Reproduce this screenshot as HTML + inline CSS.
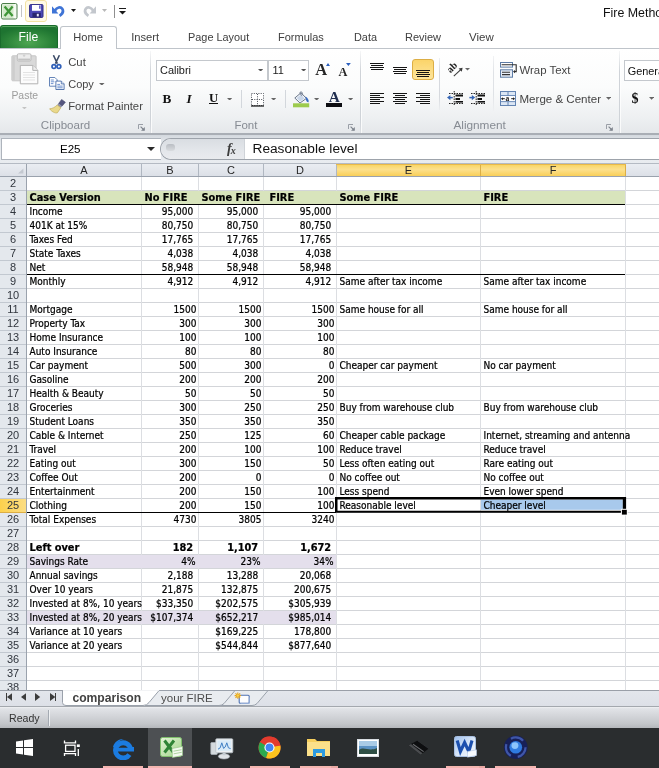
<!DOCTYPE html><html><head><meta charset="utf-8"><title>Fire Method</title><style>
*{box-sizing:border-box;margin:0;padding:0}
html,body{width:659px;height:768px;overflow:hidden;background:#fff}
body{position:relative;will-change:transform;font-family:"Liberation Sans",sans-serif;color:#000}
.a{position:absolute;white-space:nowrap}
.t{position:absolute;white-space:nowrap;line-height:1}
.s{font-family:"Liberation Serif",serif}
.cell{position:absolute;white-space:nowrap;font-family:"DejaVu Sans Condensed","DejaVu Sans","Liberation Sans",sans-serif;font-size:10px;line-height:14px;height:14px;color:#000;-webkit-text-stroke:.22px #000}
.num{text-align:right}
.b{font-family:"DejaVu Sans","Liberation Sans",sans-serif;font-weight:bold;font-size:9.8px}
.bn{font-family:"DejaVu Sans","Liberation Sans",sans-serif;font-weight:bold;font-size:9.8px;text-align:right}
.rh{position:absolute;left:0;width:26px;height:14px;font-size:11px;line-height:13px;text-align:center;color:#30353d}
.ch{position:absolute;top:164px;height:12px;font-size:11px;line-height:13px;text-align:center;color:#262626}
.hl{position:absolute;height:1px;background:#d3d5d9}
.vl{position:absolute;width:1px;background:#dcdee2}
</style></head><body>
<div class="a" style="left:0px;top:0px;width:659px;height:25px;background:#fff"></div>
<svg class="a" style="left:1px;top:3px" width="17" height="17" viewBox="0 0 17 17"><rect x="0.5" y="0.5" width="15.5" height="15.5" rx="1.5" fill="#f4faf1" stroke="#4c7f4a"/><rect x="1.5" y="1.5" width="11" height="13.5" fill="#d3e9cb"/><path d="M3.6 3.6 L11.6 13 M11.6 3.6 L3.6 13" stroke="#3f9638" stroke-width="2.3"/></svg>
<div class="a" style="left:21px;top:5px;width:1px;height:12px;background:#c4c4c4"></div>
<div class="a" style="left:25px;top:0px;width:22px;height:21.5px;background:#fffae6;border:1px solid #f3e2a2;border-radius:3px"></div>
<svg class="a" style="left:29px;top:4px" width="15" height="14" viewBox="0 0 15 14"><rect x="0.6" y="0.6" width="13.4" height="12.8" rx="1" fill="#4d49b5" stroke="#312e86"/><rect x="3" y="1" width="8.8" height="5.8" fill="#fff"/><rect x="10" y="1.4" width="1.6" height="3.4" fill="#6b68c9"/><rect x="3.4" y="8.8" width="8.4" height="4.4" fill="#28266f"/><rect x="7.8" y="9.8" width="2" height="2.6" fill="#e6e6f7"/></svg>
<svg class="a" style="left:52px;top:5px" width="13" height="12" viewBox="0 0 13 12"><path d="M0 1.2V8.4H6.4Z" fill="#3f74d6"/><path d="M2.8 5.6C5.2 2.2 8.6 1.4 10.2 3.8C11.6 6 10.6 8.8 7.6 10.8" fill="none" stroke="#3f74d6" stroke-width="2.7" stroke-linecap="butt"/></svg>
<svg class="a" style="left:70.5px;top:9px" width="5.0" height="3" viewBox="0 0 5.0 3"><path d="M0 0H5.0L2.5 3Z" fill="#1a1a1a"/></svg>
<svg class="a" style="left:82.5px;top:5px;transform:scaleX(-1)" width="13" height="12" viewBox="0 0 13 12"><path d="M0 1.2V8.4H6.4Z" fill="#c3c7cd"/><path d="M2.8 5.6C5.2 2.2 8.6 1.4 10.2 3.8C11.6 6 10.6 8.8 7.6 10.8" fill="none" stroke="#c3c7cd" stroke-width="2.7" stroke-linecap="butt"/></svg>
<svg class="a" style="left:101.5px;top:9px" width="5.0" height="3" viewBox="0 0 5.0 3"><path d="M0 0H5.0L2.5 3Z" fill="#b8b8b8"/></svg>
<div class="a" style="left:114px;top:5px;width:1px;height:13px;background:#8f8f8f"></div>
<div class="a" style="left:118.5px;top:8px;width:7px;height:1px;background:#1a1a1a"></div>
<svg class="a" style="left:118.5px;top:11px" width="7.0" height="3.5" viewBox="0 0 7.0 3.5"><path d="M0 0H7.0L3.5 3.5Z" fill="#1a1a1a"/></svg>
<div class="t" style="left:603px;top:7.20px;font-size:12.4px;color:#111;">Fire Method</div>
<div class="a" style="left:0px;top:48px;width:659px;height:1px;background:#bfc4ca"></div>
<div class="a" style="left:0px;top:25px;width:57.5px;height:23px;background:radial-gradient(ellipse 60% 70% at 50% 75%,#4ea652,#2a8238 70%,#1e7431);border-radius:3px 3px 0 0;border:1px solid #1a6b2c;border-bottom:0;box-shadow:inset 0 1px 0 #5aa860"></div>
<div class="t" style="left:18.6px;top:30.67px;font-size:12.2px;color:#fff;">File</div>
<div class="a" style="left:60px;top:25.5px;width:57px;height:23.5px;background:#fff;border:1px solid #bfc4ca;border-bottom:0;border-radius:3px 3px 0 0"></div>
<div class="t" style="left:73.3px;top:31.90px;font-size:11.1px;color:#404040;">Home</div>
<div class="t" style="left:131.2px;top:31.82px;font-size:11.2px;color:#404040;">Insert</div>
<div class="t" style="left:188px;top:32.07px;font-size:10.9px;color:#404040;">Page Layout</div>
<div class="t" style="left:278px;top:31.99px;font-size:11.0px;color:#404040;">Formulas</div>
<div class="t" style="left:354px;top:32.07px;font-size:10.9px;color:#404040;">Data</div>
<div class="t" style="left:405px;top:31.99px;font-size:11.0px;color:#404040;">Review</div>
<div class="t" style="left:469px;top:31.57px;font-size:11.5px;color:#404040;">View</div>
<div class="a" style="left:0px;top:49px;width:659px;height:85px;background:linear-gradient(#ffffff,#fbfcfc 45%,#eef0f2 80%,#e4e7ea)"></div>
<div class="a" style="left:0px;top:133px;width:659px;height:1.5px;background:#a9aeb5"></div>
<div class="a" style="left:149.5px;top:51px;width:1px;height:82px;background:linear-gradient(#f6f7f8,#cfd3d8 25%,#cfd3d8 85%,#dcdfe3)"></div>
<div class="a" style="left:150.5px;top:51px;width:1px;height:82px;background:rgba(255,255,255,.75)"></div>
<div class="a" style="left:360px;top:51px;width:1px;height:82px;background:linear-gradient(#f6f7f8,#cfd3d8 25%,#cfd3d8 85%,#dcdfe3)"></div>
<div class="a" style="left:361px;top:51px;width:1px;height:82px;background:rgba(255,255,255,.75)"></div>
<div class="a" style="left:618.5px;top:51px;width:1px;height:82px;background:linear-gradient(#f6f7f8,#cfd3d8 25%,#cfd3d8 85%,#dcdfe3)"></div>
<div class="a" style="left:619.5px;top:51px;width:1px;height:82px;background:rgba(255,255,255,.75)"></div>
<svg class="a" style="left:11px;top:53px" width="28" height="33" viewBox="0 0 28 33"><rect x="0.9" y="2.8" width="24.2" height="25" rx="0.8" fill="#d9d9d9" stroke="#c6c6c6"/><rect x="1.4" y="3.3" width="2.4" height="24" fill="#cdcdcd"/><rect x="6.3" y="0.8" width="13.7" height="7.2" rx="1.2" fill="#ececec" stroke="#bcbcbc"/><rect x="7.2" y="5.6" width="12" height="1.8" fill="#c2c2c2"/><circle cx="13.1" cy="2.6" r="1.2" fill="#d0d0d0"/><path d="M9.3 12.4 h12.5 l5 5 v13.4 h-17.5 z" fill="#fcfcfc" stroke="#b2b2b2"/><path d="M21.8 12.4v5h5" fill="#eee" stroke="#b2b2b2"/><path d="M12 19.5h12M12 22h12M12 24.5h12M12 27h12" stroke="#e3e3e3"/></svg>
<div class="t" style="left:11.4px;top:91.45px;font-size:10.45px;color:#9c9c9c;">Paste</div>
<svg class="a" style="left:21.9px;top:106.8px" width="4.8" height="2.4" viewBox="0 0 4.8 2.4"><path d="M0 0H4.8L2.4 2.4Z" fill="#c4c4c4"/></svg>
<svg class="a" style="left:51px;top:54.5px" width="11" height="15" viewBox="0 0 11 15"><path d="M2.4 0.2 L6.4 8.6 M8.4 0.2 L4.4 8.6" stroke="#3b4a66" stroke-width="1.5" fill="none"/><circle cx="2.9" cy="11.6" r="1.9" fill="none" stroke="#2f5fb8" stroke-width="1.7"/><circle cx="7.9" cy="11.6" r="1.9" fill="none" stroke="#2f5fb8" stroke-width="1.7"/></svg>
<div class="t" style="left:68.2px;top:56.73px;font-size:11.3px;color:#464646;">Cut</div>
<svg class="a" style="left:48.5px;top:77px" width="16" height="13" viewBox="0 0 16 13"><path d="M0.5 0.5h5.4l2.3 2.3v6.4h-7.7z" fill="#fff" stroke="#5578b0" stroke-width=".9"/><path d="M1.8 3h3M1.8 4.8h3.6M1.8 6.6h2.6" stroke="#5d86c8" stroke-width=".9"/><path d="M6.9 4.1h5.4l2.8 2.8v5.6h-8.2z" fill="#fff" stroke="#456aa6" stroke-width=".9"/><path d="M12.3 4.1v2.8h2.8" fill="#e2eaf6" stroke="#456aa6" stroke-width=".8"/><path d="M8.3 7.4h2.8M8.3 9.1h5.4M8.3 10.8h5.4" stroke="#5d86c8" stroke-width=".9"/></svg>
<div class="t" style="left:68.2px;top:78.89px;font-size:11px;color:#464646;">Copy</div>
<svg class="a" style="left:99.3px;top:82.7px" width="5.6" height="2.6" viewBox="0 0 5.6 2.6"><path d="M0 0H5.6L2.8 2.6Z" fill="#666"/></svg>
<svg class="a" style="left:49px;top:98.5px" width="17" height="15" viewBox="0 0 17 15"><path d="M12.6 0.4 L16.4 3.2 L13 7.2 L9.6 4.6 Z" fill="#55567f" stroke="#3b3c60" stroke-width=".5"/><path d="M9.6 4.6 L13 7.2 L11.8 8.8 L8.2 6Z" fill="#8a8ca8"/><path d="M8.2 6 L11.8 8.8 L8.4 13.8 C6 14.6 2.4 12.4 0.6 9.8 C3.6 9.6 6 8.2 8.2 6Z" fill="#ead98c" stroke="#b9a24a" stroke-width=".6"/></svg>
<div class="t" style="left:68.2px;top:100.63px;font-size:11.3px;color:#464646;">Format Painter</div>
<div class="t" style="left:40.8px;top:120.42px;font-size:11.55px;color:#868b93;">Clipboard</div>
<svg class="a" style="left:138px;top:123.5px" width="7" height="7" viewBox="0 0 7 7"><path d="M0.5 5V0.5H5" fill="none" stroke="#9a9fa7"/><path d="M2.6 2.6L6 6" stroke="#7d838c" stroke-width="1.1"/><path d="M6.8 3V6.8H3Z" fill="#7d838c"/></svg>
<div class="a" style="left:155.5px;top:59.5px;width:112.5px;height:21px;background:#fff;border:1px solid #c4c8cd"></div>
<div class="t" style="left:160px;top:64.53px;font-size:10.95px;color:#1a1a1a;">Calibri</div>
<svg class="a" style="left:258px;top:68.5px" width="5.2" height="2.6" viewBox="0 0 5.2 2.6"><path d="M0 0H5.2L2.6 2.6Z" fill="#555"/></svg>
<div class="a" style="left:267.5px;top:59.5px;width:41.5px;height:21px;background:#fff;border:1px solid #c4c8cd"></div>
<div class="t" style="left:272.5px;top:64.53px;font-size:10.95px;color:#1a1a1a;">11</div>
<svg class="a" style="left:301px;top:68.5px" width="5.2" height="2.6" viewBox="0 0 5.2 2.6"><path d="M0 0H5.2L2.6 2.6Z" fill="#555"/></svg>
<div class="t s" style="left:315.3px;top:62.18px;font-size:16.5px;color:#262626;font-weight:bold">A</div>
<div class="a" style="left:326px;top:62.5px;width:0;height:0;border-left:2.4px solid transparent;border-right:2.4px solid transparent;border-bottom:3px solid #2a5fbe"></div>
<div class="t s" style="left:338.6px;top:65.70px;font-size:12.3px;color:#262626;font-weight:bold">A</div>
<svg class="a" style="left:346px;top:63px" width="4.8" height="3" viewBox="0 0 4.8 3"><path d="M0 0H4.8L2.4 3Z" fill="#2a5fbe"/></svg>
<div class="t s" style="left:162.5px;top:91.94px;font-size:13.2px;color:#111;font-weight:bold">B</div>
<div class="t s" style="left:186.5px;top:91.94px;font-size:13.2px;color:#111;font-weight:bold;font-style:italic">I</div>
<div class="t s" style="left:209px;top:91.88px;font-size:12.8px;color:#111;font-weight:bold">U</div>
<div class="a" style="left:209px;top:103.2px;width:9px;height:1px;background:#111"></div>
<svg class="a" style="left:226.5px;top:97.6px" width="5.2" height="2.6" viewBox="0 0 5.2 2.6"><path d="M0 0H5.2L2.6 2.6Z" fill="#666"/></svg>
<div class="a" style="left:240.5px;top:90px;width:1px;height:18px;background:#d3d7dc"></div>
<svg class="a" style="left:251px;top:92.5px" width="13" height="14" viewBox="0 0 13 14"><rect x="0.5" y="0.5" width="12" height="12" fill="#fff" stroke="#4a4f57" stroke-dasharray="1 1.3"/><path d="M6.5 1V12M1 6.5H12" stroke="#4a4f57" stroke-dasharray="1 1.3"/><path d="M0 13H13" stroke="#111" stroke-width="1.2"/></svg>
<svg class="a" style="left:271px;top:97.6px" width="5.2" height="2.6" viewBox="0 0 5.2 2.6"><path d="M0 0H5.2L2.6 2.6Z" fill="#666"/></svg>
<div class="a" style="left:284.5px;top:90px;width:1px;height:18px;background:#d3d7dc"></div>
<svg class="a" style="left:293px;top:90.5px" width="17" height="17" viewBox="0 0 17 17"><path d="M1.8 7 L8 1.8 L13.4 7.4 L7 12 Z" fill="#f3f6fa" stroke="#6b778b" stroke-width="1"/><path d="M3.6 7.1 L8 3.6 L11.6 7.4 L7.1 10.4Z" fill="#c9d6e8"/><path d="M8.6 4.6 C6.6 2.8 6.6 0.8 8 0.8 C9.4 0.8 9.6 2.6 8.8 4.4" stroke="#6b778b" stroke-width=".9" fill="none"/><path d="M12.4 5.4 C14.6 6.4 16.2 9 15.6 11.2 C14.6 11.6 13.2 10.6 13 8.6Z" fill="#3a6ec4"/><rect x="0" y="12.3" width="16.2" height="4" fill="#9dcb4e"/></svg>
<svg class="a" style="left:314px;top:97.6px" width="5.2" height="2.6" viewBox="0 0 5.2 2.6"><path d="M0 0H5.2L2.6 2.6Z" fill="#666"/></svg>
<div class="t s" style="left:328.8px;top:89.49px;font-size:15.3px;color:#1f2d4f;font-weight:bold">A</div>
<div class="a" style="left:326px;top:103px;width:16px;height:3.8px;background:#0d0d12"></div>
<svg class="a" style="left:347.6px;top:97.6px" width="5.2" height="2.6" viewBox="0 0 5.2 2.6"><path d="M0 0H5.2L2.6 2.6Z" fill="#666"/></svg>
<div class="t" style="left:234.4px;top:120.47px;font-size:11.5px;color:#868b93;">Font</div>
<svg class="a" style="left:347.5px;top:123.5px" width="7" height="7" viewBox="0 0 7 7"><path d="M0.5 5V0.5H5" fill="none" stroke="#9a9fa7"/><path d="M2.6 2.6L6 6" stroke="#7d838c" stroke-width="1.1"/><path d="M6.8 3V6.8H3Z" fill="#7d838c"/></svg>
<div class="a" style="left:370px;top:63px;width:14px;height:1px;background:#151515"></div>
<div class="a" style="left:371px;top:65px;width:12px;height:1px;background:#151515"></div>
<div class="a" style="left:370px;top:67px;width:14px;height:1px;background:#151515"></div>
<div class="a" style="left:371px;top:69px;width:12px;height:1px;background:#151515"></div>
<div class="a" style="left:393px;top:67px;width:14px;height:1px;background:#151515"></div>
<div class="a" style="left:394px;top:69px;width:12px;height:1px;background:#151515"></div>
<div class="a" style="left:393px;top:71px;width:14px;height:1px;background:#151515"></div>
<div class="a" style="left:394px;top:73px;width:12px;height:1px;background:#151515"></div>
<div class="a" style="left:412.3px;top:59.2px;width:21.6px;height:21.2px;background:linear-gradient(#fbd46a,#fde59c);border:1px solid #dcae45;border-radius:3px"></div>
<div class="a" style="left:416px;top:70px;width:14px;height:1px;background:#151515"></div>
<div class="a" style="left:417px;top:72px;width:12px;height:1px;background:#151515"></div>
<div class="a" style="left:416px;top:74px;width:14px;height:1px;background:#151515"></div>
<div class="a" style="left:417px;top:76px;width:12px;height:1px;background:#151515"></div>
<svg class="a" style="left:446px;top:61px" width="20" height="18" viewBox="0 0 20 18"><text x="0" y="0" font-family="Liberation Serif, serif" font-size="10" font-weight="bold" fill="#222" transform="translate(4.4 12.4) rotate(-45)">ab</text><path d="M7.8 15.2 L15 8.4" stroke="#3c3c3c" stroke-width="1.1" fill="none"/><path d="M16.6 6.8 L12.6 7.6 L15.8 10.8Z" fill="#3c3c3c"/></svg>
<svg class="a" style="left:464.8px;top:68.2px" width="5.0" height="2.5" viewBox="0 0 5.0 2.5"><path d="M0 0H5.0L2.5 2.5Z" fill="#666"/></svg>
<div class="a" style="left:370px;top:93px;width:14px;height:1px;background:#151515"></div>
<div class="a" style="left:370px;top:95px;width:10px;height:1px;background:#151515"></div>
<div class="a" style="left:370px;top:97px;width:14px;height:1px;background:#151515"></div>
<div class="a" style="left:370px;top:99px;width:10px;height:1px;background:#151515"></div>
<div class="a" style="left:370px;top:101px;width:14px;height:1px;background:#151515"></div>
<div class="a" style="left:370px;top:103px;width:10px;height:1px;background:#151515"></div>
<div class="a" style="left:393px;top:93px;width:14px;height:1px;background:#151515"></div>
<div class="a" style="left:395px;top:95px;width:10px;height:1px;background:#151515"></div>
<div class="a" style="left:393px;top:97px;width:14px;height:1px;background:#151515"></div>
<div class="a" style="left:395px;top:99px;width:10px;height:1px;background:#151515"></div>
<div class="a" style="left:393px;top:101px;width:14px;height:1px;background:#151515"></div>
<div class="a" style="left:395px;top:103px;width:10px;height:1px;background:#151515"></div>
<div class="a" style="left:416px;top:93px;width:14px;height:1px;background:#151515"></div>
<div class="a" style="left:420px;top:95px;width:10px;height:1px;background:#151515"></div>
<div class="a" style="left:416px;top:97px;width:14px;height:1px;background:#151515"></div>
<div class="a" style="left:420px;top:99px;width:10px;height:1px;background:#151515"></div>
<div class="a" style="left:416px;top:101px;width:14px;height:1px;background:#151515"></div>
<div class="a" style="left:420px;top:103px;width:10px;height:1px;background:#151515"></div>
<div class="a" style="left:438.5px;top:58px;width:1px;height:52px;background:linear-gradient(#eef0f2,#d6d9de 25%,#d6d9de 75%,#eceef0)"></div>
<div class="a" style="left:492.5px;top:56px;width:1px;height:55px;background:linear-gradient(#f1f2f4,#dfe2e6 30%,#dfe2e6 70%,#eff0f2)"></div>
<svg class="a" style="left:447px;top:90px" width="17" height="16" viewBox="0 0 17 16"><path d="M2 3.5H16M2 13.5H16" stroke="#222" stroke-width="1" stroke-dasharray="1.5 1"/><path d="M7.2 1V15.5" stroke="#222" stroke-width="1" stroke-dasharray="1.5 1"/><path d="M8.5 5.5H16" stroke="#111" stroke-width="2"/><path d="M8.5 9H13" stroke="#111" stroke-width="2"/><path d="M8.5 11.8H16" stroke="#111" stroke-width="1.6"/><path d="M2.4 7.6H5.8" stroke="#3565b5" stroke-width="1.5"/><path d="M3.4 4.9L0 7.6L3.4 10.3Z" fill="#3565b5"/></svg>
<svg class="a" style="left:469px;top:90px" width="17" height="16" viewBox="0 0 17 16"><path d="M2 3.5H16M2 13.5H16" stroke="#222" stroke-width="1" stroke-dasharray="1.5 1"/><path d="M7.2 1V15.5" stroke="#222" stroke-width="1" stroke-dasharray="1.5 1"/><path d="M8.5 5.5H16" stroke="#111" stroke-width="2"/><path d="M8.5 9H13" stroke="#111" stroke-width="2"/><path d="M8.5 11.8H16" stroke="#111" stroke-width="1.6"/><path d="M0.4 7.6H4" stroke="#3565b5" stroke-width="1.5"/><path d="M2.8 4.9L6.2 7.6L2.8 10.3Z" fill="#3565b5"/></svg>
<svg class="a" style="left:500px;top:61.5px" width="17" height="16" viewBox="0 0 17 16"><rect x="0.5" y="0.5" width="12" height="4.6" fill="#fff" stroke="#5d7ca6"/><rect x="0.5" y="7.8" width="12" height="7.4" fill="#e8eef7" stroke="#5d7ca6"/><path d="M1.6 2.8H16.2V9.6H14" stroke="#2c2c2c" fill="none" stroke-width="1.1"/><path d="M15 8L13 9.6L15 11.2Z" fill="#2c2c2c"/><path d="M2 10.2H10M2 12.6H10" stroke="#333" stroke-width="1.1"/></svg>
<div class="t" style="left:519.5px;top:65.35px;font-size:11.4px;color:#444;">Wrap Text</div>
<svg class="a" style="left:500px;top:91px" width="16" height="15" viewBox="0 0 16 15"><rect x="0.5" y="0.5" width="15" height="14" fill="#dbe6f4" stroke="#6384b2"/><path d="M0.5 4.6h15M0.5 10.6h15M8 0.5v4M8 10.6v4" stroke="#6384b2"/><rect x="1" y="5.1" width="14" height="5" fill="#fff"/><path d="M1.4 7.7h3.4M14.6 7.7h-3.4" stroke="#222" stroke-width="1"/><path d="M3 6.2L1.2 7.7 3 9.2ZM13 6.2l1.8 1.5-1.8 1.5Z" fill="#222"/><text x="5.6" y="10" font-family="Liberation Serif, serif" font-weight="bold" font-size="7.5" fill="#111">a</text></svg>
<div class="t" style="left:519.5px;top:94.02px;font-size:11.55px;color:#444;">Merge &amp; Center</div>
<svg class="a" style="left:606px;top:97px" width="5.2" height="2.8" viewBox="0 0 5.2 2.8"><path d="M0 0H5.2L2.6 2.8Z" fill="#666"/></svg>
<div class="t" style="left:453.4px;top:120.21px;font-size:11.8px;color:#868b93;">Alignment</div>
<svg class="a" style="left:606px;top:123.5px" width="7" height="7" viewBox="0 0 7 7"><path d="M0.5 5V0.5H5" fill="none" stroke="#9a9fa7"/><path d="M2.6 2.6L6 6" stroke="#7d838c" stroke-width="1.1"/><path d="M6.8 3V6.8H3Z" fill="#7d838c"/></svg>
<div class="a" style="left:623.5px;top:59.5px;width:40px;height:21px;background:#fff;border:1px solid #c4c8cd"></div>
<div class="t" style="left:627.7px;top:65.77px;font-size:10.9px;color:#111;">General</div>
<div class="t s" style="left:631.5px;top:92.28px;font-size:14px;color:#111;font-weight:bold">$</div>
<svg class="a" style="left:649px;top:97px" width="5.2" height="2.8" viewBox="0 0 5.2 2.8"><path d="M0 0H5.2L2.6 2.8Z" fill="#666"/></svg>
<div class="a" style="left:0px;top:134.5px;width:659px;height:29.5px;background:linear-gradient(#d3d8de,#e4e8ec 25%,#e9ecf0)"></div>
<div class="a" style="left:0.5px;top:138px;width:160.5px;height:22px;background:#fff;border:1px solid #aeb4bc;border-right:0"></div>
<div class="t" style="left:60px;top:143.72px;font-size:11.55px;color:#000;">E25</div>
<svg class="a" style="left:146.7px;top:147.4px" width="8" height="4" viewBox="0 0 8 4"><path d="M0 0H8L4 4Z" fill="#2a2a2a"/></svg>
<div class="a" style="left:159.5px;top:138px;width:500px;height:22px;background:#fff;border:1px solid #9da3ab;border-right:0;border-radius:11px 0 0 11px"></div>
<div class="a" style="left:160.5px;top:139px;width:84px;height:20px;background:linear-gradient(#d9dde2,#e4e7eb 60%,#e9ebee);border-radius:10px 0 0 10px"></div>
<div class="a" style="left:166px;top:144.4px;width:8.8px;height:6.2px;border-radius:3px;background:linear-gradient(#b9bdc3,#d9dcdf)"></div>
<div class="t s" style="left:227px;top:141.5px;font-size:14px;font-style:italic;font-weight:bold;color:#3c3c3c">f<span style="font-size:10px;position:relative;top:1px;left:-1px">x</span></div>
<div class="a" style="left:244px;top:139px;width:1px;height:20px;background:#cfd3d8"></div>
<div class="t" style="left:252.5px;top:142.30px;font-size:13.7px;color:#111;">Reasonable level</div>
<div class="a" style="left:0px;top:163px;width:659px;height:14px;background:linear-gradient(#eaedf2,#dce0e7);border-top:1px solid #b4bac3;border-bottom:1px solid #9aa2ad"></div>
<div class="a" style="left:0px;top:164px;width:27px;height:12px;border-right:1px solid #9aa2ad"></div>
<svg class="a" style="left:17px;top:168px" width="7" height="6" viewBox="0 0 7 6"><path d="M6.4 0.4V5.4H1Z" fill="#c3c8d0"/></svg>
<div class="ch" style="left:27px;width:115px;border-right:1px solid #b0b7c1">A</div>
<div class="ch" style="left:142px;width:57px;border-right:1px solid #b0b7c1">B</div>
<div class="ch" style="left:199px;width:65px;border-right:1px solid #b0b7c1">C</div>
<div class="ch" style="left:264px;width:73px;border-right:1px solid #b0b7c1">D</div>
<div class="ch" style="left:337px;width:144px;background:linear-gradient(#f8d45e,#fce08e 45%,#f9cf58);border-right:1px solid #dcae45">E</div>
<div class="ch" style="left:481px;width:145px;background:linear-gradient(#f8d45e,#fce08e 45%,#f9cf58);border-right:1px solid #dcae45">F</div>
<div class="ch" style="left:626px;width:75px;border-right:1px solid #b0b7c1"></div>
<div class="a" style="left:336px;top:164px;width:290px;height:1px;background:#e9b949"></div>
<div class="a" style="left:0px;top:177px;width:27px;height:513px;background:#e4e8ed;border-right:1px solid #9aa2ad"></div>
<div class="rh" style="top:177px;border-bottom:1px solid #c2c8d0">2</div>
<div class="rh" style="top:191px;border-bottom:1px solid #c2c8d0">3</div>
<div class="rh" style="top:205px;border-bottom:1px solid #c2c8d0">4</div>
<div class="rh" style="top:219px;border-bottom:1px solid #c2c8d0">5</div>
<div class="rh" style="top:233px;border-bottom:1px solid #c2c8d0">6</div>
<div class="rh" style="top:247px;border-bottom:1px solid #c2c8d0">7</div>
<div class="rh" style="top:261px;border-bottom:1px solid #c2c8d0">8</div>
<div class="rh" style="top:275px;border-bottom:1px solid #c2c8d0">9</div>
<div class="rh" style="top:289px;border-bottom:1px solid #c2c8d0">10</div>
<div class="rh" style="top:303px;border-bottom:1px solid #c2c8d0">11</div>
<div class="rh" style="top:317px;border-bottom:1px solid #c2c8d0">12</div>
<div class="rh" style="top:331px;border-bottom:1px solid #c2c8d0">13</div>
<div class="rh" style="top:345px;border-bottom:1px solid #c2c8d0">14</div>
<div class="rh" style="top:359px;border-bottom:1px solid #c2c8d0">15</div>
<div class="rh" style="top:373px;border-bottom:1px solid #c2c8d0">16</div>
<div class="rh" style="top:387px;border-bottom:1px solid #c2c8d0">17</div>
<div class="rh" style="top:401px;border-bottom:1px solid #c2c8d0">18</div>
<div class="rh" style="top:415px;border-bottom:1px solid #c2c8d0">19</div>
<div class="rh" style="top:429px;border-bottom:1px solid #c2c8d0">20</div>
<div class="rh" style="top:443px;border-bottom:1px solid #c2c8d0">21</div>
<div class="rh" style="top:457px;border-bottom:1px solid #c2c8d0">22</div>
<div class="rh" style="top:471px;border-bottom:1px solid #c2c8d0">23</div>
<div class="rh" style="top:485px;border-bottom:1px solid #c2c8d0">24</div>
<div class="rh" style="top:499px;background:linear-gradient(90deg,#fdd14c,#fbdd84);border-bottom:1px solid #dcae45">25</div>
<div class="rh" style="top:513px;border-bottom:1px solid #c2c8d0">26</div>
<div class="rh" style="top:527px;border-bottom:1px solid #c2c8d0">27</div>
<div class="rh" style="top:541px;border-bottom:1px solid #c2c8d0">28</div>
<div class="rh" style="top:555px;border-bottom:1px solid #c2c8d0">29</div>
<div class="rh" style="top:569px;border-bottom:1px solid #c2c8d0">30</div>
<div class="rh" style="top:583px;border-bottom:1px solid #c2c8d0">31</div>
<div class="rh" style="top:597px;border-bottom:1px solid #c2c8d0">32</div>
<div class="rh" style="top:611px;border-bottom:1px solid #c2c8d0">33</div>
<div class="rh" style="top:625px;border-bottom:1px solid #c2c8d0">34</div>
<div class="rh" style="top:639px;border-bottom:1px solid #c2c8d0">35</div>
<div class="rh" style="top:653px;border-bottom:1px solid #c2c8d0">36</div>
<div class="rh" style="top:667px;border-bottom:1px solid #c2c8d0">37</div>
<div class="rh" style="top:681px;border-bottom:1px solid #c2c8d0">38</div>
<div class="hl" style="left:27px;top:190px;width:632px"></div>
<div class="hl" style="left:27px;top:204px;width:632px"></div>
<div class="hl" style="left:27px;top:218px;width:632px"></div>
<div class="hl" style="left:27px;top:232px;width:632px"></div>
<div class="hl" style="left:27px;top:246px;width:632px"></div>
<div class="hl" style="left:27px;top:260px;width:632px"></div>
<div class="hl" style="left:27px;top:274px;width:632px"></div>
<div class="hl" style="left:27px;top:288px;width:632px"></div>
<div class="hl" style="left:27px;top:302px;width:632px"></div>
<div class="hl" style="left:27px;top:316px;width:632px"></div>
<div class="hl" style="left:27px;top:330px;width:632px"></div>
<div class="hl" style="left:27px;top:344px;width:632px"></div>
<div class="hl" style="left:27px;top:358px;width:632px"></div>
<div class="hl" style="left:27px;top:372px;width:632px"></div>
<div class="hl" style="left:27px;top:386px;width:632px"></div>
<div class="hl" style="left:27px;top:400px;width:632px"></div>
<div class="hl" style="left:27px;top:414px;width:632px"></div>
<div class="hl" style="left:27px;top:428px;width:632px"></div>
<div class="hl" style="left:27px;top:442px;width:632px"></div>
<div class="hl" style="left:27px;top:456px;width:632px"></div>
<div class="hl" style="left:27px;top:470px;width:632px"></div>
<div class="hl" style="left:27px;top:484px;width:632px"></div>
<div class="hl" style="left:27px;top:498px;width:632px"></div>
<div class="hl" style="left:27px;top:512px;width:632px"></div>
<div class="hl" style="left:27px;top:526px;width:632px"></div>
<div class="hl" style="left:27px;top:540px;width:632px"></div>
<div class="hl" style="left:27px;top:554px;width:632px"></div>
<div class="hl" style="left:27px;top:568px;width:632px"></div>
<div class="hl" style="left:27px;top:582px;width:632px"></div>
<div class="hl" style="left:27px;top:596px;width:632px"></div>
<div class="hl" style="left:27px;top:610px;width:632px"></div>
<div class="hl" style="left:27px;top:624px;width:632px"></div>
<div class="hl" style="left:27px;top:638px;width:632px"></div>
<div class="hl" style="left:27px;top:652px;width:632px"></div>
<div class="hl" style="left:27px;top:666px;width:632px"></div>
<div class="hl" style="left:27px;top:680px;width:632px"></div>
<div class="hl" style="left:27px;top:694px;width:632px"></div>
<div class="vl" style="left:141px;top:177px;height:513px"></div>
<div class="vl" style="left:198px;top:177px;height:513px"></div>
<div class="vl" style="left:263px;top:177px;height:513px"></div>
<div class="vl" style="left:336px;top:177px;height:513px"></div>
<div class="vl" style="left:480px;top:177px;height:513px"></div>
<div class="vl" style="left:625px;top:177px;height:513px"></div>
<div class="a" style="left:27px;top:191px;width:598px;height:13px;background:#d8e4bc"></div>
<div class="a" style="left:27px;top:555px;width:309px;height:13px;background:#e4dfec"></div>
<div class="a" style="left:27px;top:611px;width:309px;height:13px;background:#e4dfec"></div>
<div class="a" style="left:27px;top:204px;width:598px;height:1px;background:#000"></div>
<div class="a" style="left:27px;top:274px;width:598px;height:1px;background:#000"></div>
<div class="a" style="left:27px;top:512px;width:309px;height:1px;background:#000"></div>
<svg class="a" style="left:480px;top:498px" width="146" height="14" viewBox="480 498 146 14"><rect x="481" y="499.6" width="141.8" height="10.2" fill="#a8c9ec"/></svg>
<div class="cell b" style="left:29.5px;top:191.4px">Case Version</div>
<div class="cell b" style="left:144.5px;top:191.4px">No FIRE</div>
<div class="cell b" style="left:201.5px;top:191.4px">Some FIRE</div>
<div class="cell b" style="left:269.5px;top:191.4px">FIRE</div>
<div class="cell b" style="left:339.5px;top:191.4px">Some FIRE</div>
<div class="cell b" style="left:483.5px;top:191.4px">FIRE</div>
<div class="cell" style="left:29.5px;top:205.4px">Income</div>
<div class="cell num" style="left:142px;width:51.2px;top:205.4px">95,000</div>
<div class="cell num" style="left:199px;width:59.2px;top:205.4px">95,000</div>
<div class="cell num" style="left:264px;width:67.2px;top:205.4px">95,000</div>
<div class="cell" style="left:29.5px;top:219.4px">401K at 15%</div>
<div class="cell num" style="left:142px;width:51.2px;top:219.4px">80,750</div>
<div class="cell num" style="left:199px;width:59.2px;top:219.4px">80,750</div>
<div class="cell num" style="left:264px;width:67.2px;top:219.4px">80,750</div>
<div class="cell" style="left:29.5px;top:233.4px">Taxes Fed</div>
<div class="cell num" style="left:142px;width:51.2px;top:233.4px">17,765</div>
<div class="cell num" style="left:199px;width:59.2px;top:233.4px">17,765</div>
<div class="cell num" style="left:264px;width:67.2px;top:233.4px">17,765</div>
<div class="cell" style="left:29.5px;top:247.4px">State Taxes</div>
<div class="cell num" style="left:142px;width:51.2px;top:247.4px">4,038</div>
<div class="cell num" style="left:199px;width:59.2px;top:247.4px">4,038</div>
<div class="cell num" style="left:264px;width:67.2px;top:247.4px">4,038</div>
<div class="cell" style="left:29.5px;top:261.4px">Net</div>
<div class="cell num" style="left:142px;width:51.2px;top:261.4px">58,948</div>
<div class="cell num" style="left:199px;width:59.2px;top:261.4px">58,948</div>
<div class="cell num" style="left:264px;width:67.2px;top:261.4px">58,948</div>
<div class="cell" style="left:29.5px;top:275.4px">Monthly</div>
<div class="cell num" style="left:142px;width:51.2px;top:275.4px">4,912</div>
<div class="cell num" style="left:199px;width:59.2px;top:275.4px">4,912</div>
<div class="cell num" style="left:264px;width:67.2px;top:275.4px">4,912</div>
<div class="cell" style="left:339.5px;top:275.4px">Same after tax income</div>
<div class="cell" style="left:483.5px;top:275.4px">Same after tax income</div>
<div class="cell" style="left:29.5px;top:303.4px">Mortgage</div>
<div class="cell num" style="left:142px;width:54.4px;top:303.4px">1500</div>
<div class="cell num" style="left:199px;width:62.4px;top:303.4px">1500</div>
<div class="cell num" style="left:264px;width:70.4px;top:303.4px">1500</div>
<div class="cell" style="left:339.5px;top:303.4px">Same house for all</div>
<div class="cell" style="left:483.5px;top:303.4px">Same house for all</div>
<div class="cell" style="left:29.5px;top:317.4px">Property Tax</div>
<div class="cell num" style="left:142px;width:54.4px;top:317.4px">300</div>
<div class="cell num" style="left:199px;width:62.4px;top:317.4px">300</div>
<div class="cell num" style="left:264px;width:70.4px;top:317.4px">300</div>
<div class="cell" style="left:29.5px;top:331.4px">Home Insurance</div>
<div class="cell num" style="left:142px;width:54.4px;top:331.4px">100</div>
<div class="cell num" style="left:199px;width:62.4px;top:331.4px">100</div>
<div class="cell num" style="left:264px;width:70.4px;top:331.4px">100</div>
<div class="cell" style="left:29.5px;top:345.4px">Auto Insurance</div>
<div class="cell num" style="left:142px;width:54.4px;top:345.4px">80</div>
<div class="cell num" style="left:199px;width:62.4px;top:345.4px">80</div>
<div class="cell num" style="left:264px;width:70.4px;top:345.4px">80</div>
<div class="cell" style="left:29.5px;top:359.4px">Car payment</div>
<div class="cell num" style="left:142px;width:54.4px;top:359.4px">500</div>
<div class="cell num" style="left:199px;width:62.4px;top:359.4px">300</div>
<div class="cell num" style="left:264px;width:70.4px;top:359.4px">0</div>
<div class="cell" style="left:339.5px;top:359.4px">Cheaper car payment</div>
<div class="cell" style="left:483.5px;top:359.4px">No car payment</div>
<div class="cell" style="left:29.5px;top:373.4px">Gasoline</div>
<div class="cell num" style="left:142px;width:54.4px;top:373.4px">200</div>
<div class="cell num" style="left:199px;width:62.4px;top:373.4px">200</div>
<div class="cell num" style="left:264px;width:70.4px;top:373.4px">200</div>
<div class="cell" style="left:29.5px;top:387.4px">Health &amp; Beauty</div>
<div class="cell num" style="left:142px;width:54.4px;top:387.4px">50</div>
<div class="cell num" style="left:199px;width:62.4px;top:387.4px">50</div>
<div class="cell num" style="left:264px;width:70.4px;top:387.4px">50</div>
<div class="cell" style="left:29.5px;top:401.4px">Groceries</div>
<div class="cell num" style="left:142px;width:54.4px;top:401.4px">300</div>
<div class="cell num" style="left:199px;width:62.4px;top:401.4px">250</div>
<div class="cell num" style="left:264px;width:70.4px;top:401.4px">250</div>
<div class="cell" style="left:339.5px;top:401.4px">Buy from warehouse club</div>
<div class="cell" style="left:483.5px;top:401.4px">Buy from warehouse club</div>
<div class="cell" style="left:29.5px;top:415.4px">Student Loans</div>
<div class="cell num" style="left:142px;width:54.4px;top:415.4px">350</div>
<div class="cell num" style="left:199px;width:62.4px;top:415.4px">350</div>
<div class="cell num" style="left:264px;width:70.4px;top:415.4px">350</div>
<div class="cell" style="left:29.5px;top:429.4px">Cable &amp; Internet</div>
<div class="cell num" style="left:142px;width:54.4px;top:429.4px">250</div>
<div class="cell num" style="left:199px;width:62.4px;top:429.4px">125</div>
<div class="cell num" style="left:264px;width:70.4px;top:429.4px">60</div>
<div class="cell" style="left:339.5px;top:429.4px">Cheaper cable package</div>
<div class="cell" style="left:483.5px;top:429.4px">Internet, streaming and antenna</div>
<div class="cell" style="left:29.5px;top:443.4px">Travel</div>
<div class="cell num" style="left:142px;width:54.4px;top:443.4px">200</div>
<div class="cell num" style="left:199px;width:62.4px;top:443.4px">100</div>
<div class="cell num" style="left:264px;width:70.4px;top:443.4px">100</div>
<div class="cell" style="left:339.5px;top:443.4px">Reduce travel</div>
<div class="cell" style="left:483.5px;top:443.4px">Reduce travel</div>
<div class="cell" style="left:29.5px;top:457.4px">Eating out</div>
<div class="cell num" style="left:142px;width:54.4px;top:457.4px">300</div>
<div class="cell num" style="left:199px;width:62.4px;top:457.4px">150</div>
<div class="cell num" style="left:264px;width:70.4px;top:457.4px">50</div>
<div class="cell" style="left:339.5px;top:457.4px">Less often eating out</div>
<div class="cell" style="left:483.5px;top:457.4px">Rare eating out</div>
<div class="cell" style="left:29.5px;top:471.4px">Coffee Out</div>
<div class="cell num" style="left:142px;width:54.4px;top:471.4px">200</div>
<div class="cell num" style="left:199px;width:62.4px;top:471.4px">0</div>
<div class="cell num" style="left:264px;width:70.4px;top:471.4px">0</div>
<div class="cell" style="left:339.5px;top:471.4px">No coffee out</div>
<div class="cell" style="left:483.5px;top:471.4px">No coffee out</div>
<div class="cell" style="left:29.5px;top:485.4px">Entertainment</div>
<div class="cell num" style="left:142px;width:54.4px;top:485.4px">200</div>
<div class="cell num" style="left:199px;width:62.4px;top:485.4px">150</div>
<div class="cell num" style="left:264px;width:70.4px;top:485.4px">100</div>
<div class="cell" style="left:339.5px;top:485.4px">Less spend</div>
<div class="cell" style="left:483.5px;top:485.4px">Even lower spend</div>
<div class="cell" style="left:29.5px;top:499.4px">Clothing</div>
<div class="cell num" style="left:142px;width:54.4px;top:499.4px">200</div>
<div class="cell num" style="left:199px;width:62.4px;top:499.4px">150</div>
<div class="cell num" style="left:264px;width:70.4px;top:499.4px">100</div>
<div class="cell" style="left:339.5px;top:499.4px">Reasonable level</div>
<div class="cell" style="left:483.5px;top:499.4px">Cheaper level</div>
<div class="cell" style="left:29.5px;top:513.4px">Total Expenses</div>
<div class="cell num" style="left:142px;width:54.4px;top:513.4px">4730</div>
<div class="cell num" style="left:199px;width:62.4px;top:513.4px">3805</div>
<div class="cell num" style="left:264px;width:70.4px;top:513.4px">3240</div>
<div class="cell b" style="left:29.5px;top:541.4px">Left over</div>
<div class="cell bn" style="left:142px;width:51.2px;top:541.4px">182</div>
<div class="cell bn" style="left:199px;width:59.2px;top:541.4px">1,107</div>
<div class="cell bn" style="left:264px;width:67.2px;top:541.4px">1,672</div>
<div class="cell" style="left:29.5px;top:555.4px">Savings Rate</div>
<div class="cell num" style="left:142px;width:53.6px;top:555.4px">4%</div>
<div class="cell num" style="left:199px;width:61.6px;top:555.4px">23%</div>
<div class="cell num" style="left:264px;width:69.6px;top:555.4px">34%</div>
<div class="cell" style="left:29.5px;top:569.4px">Annual savings</div>
<div class="cell num" style="left:142px;width:51.2px;top:569.4px">2,188</div>
<div class="cell num" style="left:199px;width:59.2px;top:569.4px">13,288</div>
<div class="cell num" style="left:264px;width:67.2px;top:569.4px">20,068</div>
<div class="cell" style="left:29.5px;top:583.4px">Over 10 years</div>
<div class="cell num" style="left:142px;width:51.2px;top:583.4px">21,875</div>
<div class="cell num" style="left:199px;width:59.2px;top:583.4px">132,875</div>
<div class="cell num" style="left:264px;width:67.2px;top:583.4px">200,675</div>
<div class="cell" style="left:29.5px;top:597.4px">Invested at 8%, 10 years</div>
<div class="cell num" style="left:142px;width:51.2px;top:597.4px">$33,350</div>
<div class="cell num" style="left:199px;width:59.2px;top:597.4px">$202,575</div>
<div class="cell num" style="left:264px;width:67.2px;top:597.4px">$305,939</div>
<div class="cell" style="left:29.5px;top:611.4px">Invested at 8%, 20 years</div>
<div class="cell num" style="left:142px;width:51.2px;top:611.4px">$107,374</div>
<div class="cell num" style="left:199px;width:59.2px;top:611.4px">$652,217</div>
<div class="cell num" style="left:264px;width:67.2px;top:611.4px">$985,014</div>
<div class="cell" style="left:29.5px;top:625.4px">Variance at 10 years</div>
<div class="cell num" style="left:199px;width:59.2px;top:625.4px">$169,225</div>
<div class="cell num" style="left:264px;width:67.2px;top:625.4px">178,800</div>
<div class="cell" style="left:29.5px;top:639.4px">Variance at 20 years</div>
<div class="cell num" style="left:199px;width:59.2px;top:639.4px">$544,844</div>
<div class="cell num" style="left:264px;width:67.2px;top:639.4px">$877,640</div>
<svg class="a" style="left:334px;top:496px" width="296" height="20" viewBox="334 496 296 20"><path fill-rule="evenodd" d="M335 497H626.1V512.8H335Z M337.5 499.6V510.8H622.8V499.6Z" fill="#000"/><rect x="620.9" y="508.8" width="6.9" height="6.8" fill="#fff"/><rect x="621.9" y="509.8" width="4.9" height="4.8" fill="#000"/></svg>
<div class="a" style="left:0px;top:690px;width:659px;height:16px;background:linear-gradient(#e3e6ec,#dde0e7);border-top:1px solid #9a9fa8"></div>
<div class="a" style="left:5.6px;top:693.4px;width:1.4px;height:8px;background:#3c3c3c"></div><svg class="a" style="left:6.8px;top:693.4px" width="5.2" height="8" viewBox="0 0 5.2 8"><path d="M5.2 0V8L0 4Z" fill="#3c3c3c"/></svg>
<svg class="a" style="left:20.8px;top:693.4px" width="5.2" height="8" viewBox="0 0 5.2 8"><path d="M5.2 0V8L0 4Z" fill="#3c3c3c"/></svg>
<svg class="a" style="left:35.4px;top:693.4px" width="5.2" height="8" viewBox="0 0 5.2 8"><path d="M0 0V8L5.2 4Z" fill="#3c3c3c"/></svg>
<svg class="a" style="left:49.6px;top:693.4px" width="5.2" height="8" viewBox="0 0 5.2 8"><path d="M0 0V8L5.2 4Z" fill="#3c3c3c"/></svg><div class="a" style="left:55px;top:693.4px;width:1.4px;height:8px;background:#3c3c3c"></div>
<svg class="a" style="left:59px;top:690px" width="215" height="17" viewBox="0 0 215 17"><path d="M163 13.5 L174 0.5 L209 0.5 L198 13.5 Q196 15.5 193 15.5 L160 15.5" fill="#e9ecf0" stroke="#9aa1ab"/><path d="M88 13.5 L99 0.5 L176 0.5 L165 13.5 Q163 15.5 160 15.5 L86 15.5" fill="#e9ecf0" stroke="#9aa1ab"/><path d="M3.5 0 L3.5 12.5 Q3.5 15.5 7 15.5 L84 15.5 Q88 15.5 90 12.5 L100.5 0 Z" fill="#fff" stroke="#9aa1ab"/><path d="M4 0H100" stroke="#fff" stroke-width="1.4"/></svg>
<div class="t" style="left:72.4px;top:692.22px;font-size:12.15px;color:#424242;font-weight:bold">comparison</div>
<div class="t" style="left:161px;top:692.77px;font-size:11.5px;color:#4d4d4d;">your FIRE</div>
<svg class="a" style="left:234px;top:691.5px" width="17" height="13" viewBox="0 0 17 13"><rect x="5.2" y="3.3" width="10" height="8" rx="1" fill="#fdfdfe" stroke="#4f72b2" stroke-width="1.1"/><path d="M6.6 11.4h8.6v-6" stroke="#9db6dc" fill="none" stroke-width=".9"/><path d="M3.8 0.4v6.4M0.6 3.6h6.4M1.5 1.3l4.6 4.6M6.1 1.3L1.5 5.9" stroke="#e6a317" stroke-width="1.1"/><circle cx="3.8" cy="3.6" r="1.3" fill="#f7cf4a"/></svg>
<div class="a" style="left:0px;top:706px;width:659px;height:22px;background:linear-gradient(#f0f1f3 0,#e1e3e7 8%,#d2d4d8 45%,#c3c6ca 80%,#b4b7bb 100%);border-top:1px solid #a4a8ae"></div>
<div class="t" style="left:9px;top:712.83px;font-size:10.6px;color:#333;">Ready</div>
<div class="a" style="left:48px;top:710px;width:1px;height:16px;background:#a4aab2"></div>
<div class="a" style="left:49px;top:710px;width:1px;height:16px;background:#eef0f2"></div>
<div class="a" style="left:0px;top:728px;width:659px;height:40px;background:#2a2d2f"></div>
<div class="a" style="left:147.8px;top:728px;width:44.4px;height:40px;background:#4d5053"></div>
<div class="a" style="left:331px;top:766px;width:7px;height:2px;background:#e9a9a4"></div>
<div class="a" style="left:478.6px;top:766px;width:6.4px;height:2px;background:#e9a9a4"></div>
<div class="a" style="left:102.7px;top:765.6px;width:40.3px;height:2.4px;background:#f4b5b0"></div>
<div class="a" style="left:147.8px;top:765.6px;width:44.39999999999998px;height:2.4px;background:#f4b5b0"></div>
<div class="a" style="left:250px;top:765.6px;width:40px;height:2.4px;background:#f4b5b0"></div>
<div class="a" style="left:299.5px;top:765.6px;width:31.5px;height:2.4px;background:#f4b5b0"></div>
<div class="a" style="left:446.3px;top:765.6px;width:32.30000000000001px;height:2.4px;background:#f4b5b0"></div>
<div class="a" style="left:495px;top:765.6px;width:40.700000000000045px;height:2.4px;background:#f4b5b0"></div>
<svg class="a" style="left:16px;top:739px" width="17" height="17" viewBox="0 0 17 17"><path d="M0 2.4 L7 1.4 V8 H0Z M8 1.2 L17 0 V8 H8Z M0 9 H7 V15.6 L0 14.6Z M8 9 H17 V17 L8 15.8Z" fill="#fff"/></svg>
<svg class="a" style="left:63px;top:739.5px" width="18" height="17" viewBox="0 0 18 17"><rect x="2.6" y="5.2" width="9.4" height="6.2" fill="none" stroke="#fff" stroke-width="1.3"/><path d="M0.8 2.9H13.2M1.5 0.5V3.6M12.5 0.5V3.6M0.8 13.7H13.2M1.5 13V16M12.5 13V16" stroke="#fff" stroke-width="1.3" fill="none"/><rect x="13.8" y="4.4" width="3" height="2.6" fill="#fff"/><path d="M15.3 9V16" stroke="#fff" stroke-width="1.3"/></svg>
<svg class="a" style="left:112px;top:737.5px" width="22" height="22" viewBox="0 0 22 22"><path d="M18.6 11.2 A7.6 7.6 0 1 0 17.4 16.6" fill="none" stroke="#1b7be0" stroke-width="4.8"/><path d="M5 11.6 H21 V9 " fill="none" stroke="#1b7be0" stroke-width="3.6"/><path d="M1 9 C2.5 3 8 0.6 12 1 C6 2.4 4.4 6 3.6 10Z" fill="#1b7be0"/></svg>
<svg class="a" style="left:159.5px;top:736.5px" width="23" height="21" viewBox="0 0 23 21"><defs><linearGradient id="xg" x1="0" y1="0" x2="1" y2="1"><stop offset="0" stop-color="#e4f3d8"/><stop offset="1" stop-color="#9fd487"/></linearGradient></defs><rect x="0.5" y="0.5" width="21" height="19" rx="2" fill="url(#xg)" stroke="#7fbf6c"/><path d="M4.5 3.5 L13.5 15.5 M14 3.5 L4.5 15.5" stroke="#2f8436" stroke-width="3"/><path d="M12 11.5 L22.5 9.5 V18.5 L12.5 20.5Z" fill="#f4faf0" stroke="#9cc98d" stroke-width=".7"/><path d="M13.5 14.2l8-1.5M13.7 16.8l8-1.5" stroke="#9cc98d" stroke-width=".8"/></svg>
<svg class="a" style="left:209.5px;top:737.5px" width="24" height="22" viewBox="0 0 24 22"><rect x="0.8" y="4.5" width="6.5" height="12" rx="0.8" fill="#d4dade" stroke="#aeb6bd" stroke-width=".7"/><rect x="5.8" y="0.8" width="17" height="14" rx="1" fill="#eef1f4" stroke="#b8c0c7" stroke-width=".8"/><rect x="7.4" y="2.4" width="13.8" height="10.4" fill="#d9ebf8"/><path d="M8 11.2l2.2-1.4 1.6-5 1.8 5.6 1.6-1.4 1.6-4.2 1.6 5 2.2.8" stroke="#3f7fc4" stroke-width="1" fill="none"/><ellipse cx="14" cy="18.4" rx="5.6" ry="2.6" fill="#dfe3e7" stroke="#aeb6bd" stroke-width=".6"/><rect x="12.6" y="14.8" width="3" height="2.4" fill="#c4cbd1"/></svg>
<svg class="a" style="left:258px;top:736px" width="23" height="23" viewBox="0 0 24 24"><circle cx="12" cy="12" r="11.5" fill="#e33b2e"/><path d="M12 12 L2.2 6.2 A11.5 11.5 0 0 0 8.5 23 Z" fill="#2da94f"/><path d="M12 12 L8.5 23 A11.5 11.5 0 0 0 23.4 10 L12 10Z" fill="#fcc31e"/><path d="M12 12 L23.4 10 A11.5 11.5 0 0 0 2.2 6.2Z" fill="#e33b2e"/><circle cx="12" cy="12" r="5.3" fill="#fff"/><circle cx="12" cy="12" r="4.1" fill="#4285f4"/></svg>
<svg class="a" style="left:307px;top:738px" width="24" height="20" viewBox="0 0 24 20"><path d="M0 1h8l2 2h13v15H0z" fill="#f6cf5e"/><rect x="0" y="4" width="23" height="14" fill="#fbe08a"/><path d="M6 11h12v8h-3v-4H9v4H6z" fill="#2e9be0"/></svg>
<svg class="a" style="left:357px;top:739px" width="22" height="18" viewBox="0 0 22 18"><rect x="0.5" y="0.5" width="21" height="17" fill="#fff" stroke="#d8dde2"/><rect x="2" y="2" width="18" height="13" fill="#5c93c4"/><path d="M2 11 C7 7 12 13 20 9 V15 H2Z" fill="#2f4f45"/><rect x="2" y="2" width="18" height="5" fill="#a9cbe6"/></svg>
<svg class="a" style="left:408px;top:740px" width="22" height="16" viewBox="0 0 22 16"><path d="M0.6 5.2 L9.6 0.6 L20.8 8.6 L12.6 14.8 Z" fill="#0d0e10"/><path d="M0.6 5.2 L3 4 L14.6 13.2 L12.6 14.8Z" fill="#4a4c4f"/><path d="M5 4.2 L15.6 11.6" stroke="#6b6d70" stroke-width="1.1"/><path d="M9.6 0.6 L20.8 8.6" stroke="#34363a" stroke-width=".8"/></svg>
<svg class="a" style="left:453.5px;top:735.5px" width="23" height="22" viewBox="0 0 23 22"><defs><linearGradient id="wg" x1="0" y1="0" x2="1" y2="1"><stop offset="0" stop-color="#9fc0ee"/><stop offset=".55" stop-color="#dce8f8"/><stop offset="1" stop-color="#f6f9fd"/></linearGradient></defs><rect x="0.5" y="0.5" width="21" height="20" rx="2" fill="url(#wg)" stroke="#a9c0e2"/><path d="M3.2 4.5 L6.4 15.5 L10.6 6.5 L14.8 15.5 L18 4.5" stroke="#1b4fae" stroke-width="3.1" fill="none" stroke-linejoin="miter"/><path d="M13.5 15.5 L22.5 13.8 V19.5 L13.5 21.2Z" fill="#f7fafe" stroke="#b4c8e6" stroke-width=".6"/></svg>
<svg class="a" style="left:502.5px;top:735.3px" width="25.5" height="24.5" viewBox="0 0 24 24"><circle cx="12" cy="12" r="11.6" fill="#172058"/><circle cx="12" cy="12" r="9.6" fill="none" stroke="#3f56a8" stroke-width="2.2" stroke-dasharray="13 7"/><circle cx="12" cy="12" r="6.2" fill="#2f7be0"/><circle cx="11.2" cy="10.4" r="3.4" fill="#8cc4fb"/></svg>
</body></html>
